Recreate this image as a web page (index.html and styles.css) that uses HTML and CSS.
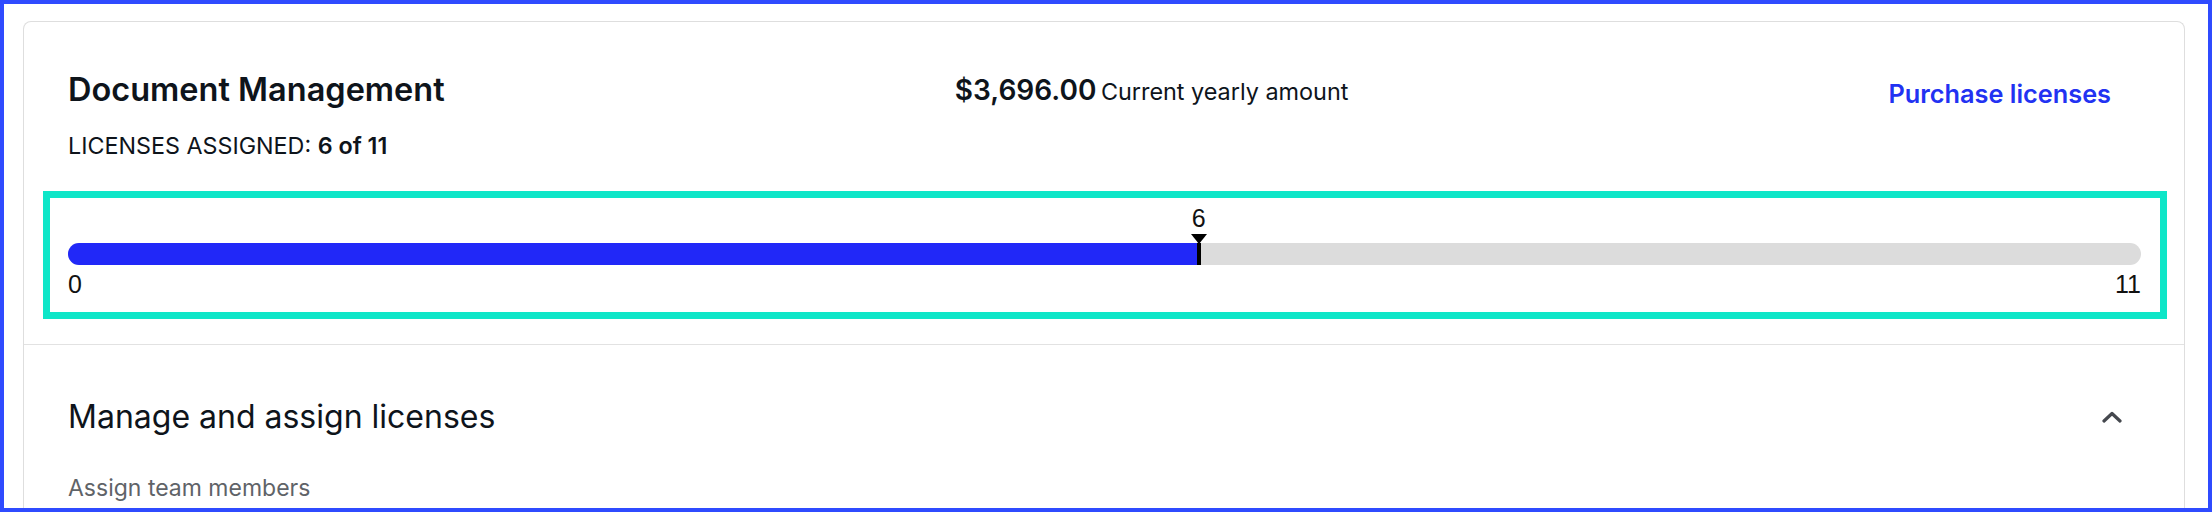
FILE: index.html
```html
<!DOCTYPE html>
<html lang="en">
<head>
<meta charset="utf-8">
<title>Document Management licenses</title>
<link rel="stylesheet" href="styles.css">
</head>
<body>
  <div class="card">
    <section class="summary">
      <div class="summary-row">
        <h1 class="product-title">Document Management</h1>
        <div class="price">
          <span class="price-amount">$3,696.00</span>
          <span class="price-label">Current yearly amount</span>
        </div>
        <a class="purchase-link" href="#">Purchase licenses</a>
      </div>
      <p class="assigned">LICENSES ASSIGNED: <strong>6 of 11</strong></p>
    </section>

    <section class="usage">
      <div class="meter">
        <div class="meter-fill" style="width: 54.545%"></div>
        <div class="meter-marker" style="left: 54.545%">
          <span class="marker-value">6</span>
        </div>
      </div>
      <div class="meter-scale">
        <span>0</span>
        <span>11</span>
      </div>
    </section>

    <section class="manage">
      <div class="manage-head">
        <h2 class="manage-title">Manage and assign licenses</h2>
        <button class="collapse-btn" aria-label="Collapse">
          <svg width="20" height="12" viewBox="0 0 20 12" aria-hidden="true">
            <polyline points="2,10 10,2.5 18,10" fill="none" stroke="#45484e" stroke-width="3.2" stroke-linecap="round" stroke-linejoin="round"/>
          </svg>
        </button>
      </div>
      <p class="manage-sub">Assign team members</p>
    </section>
  </div>
</body>
</html>
```

FILE: styles.css
```css
* {
  box-sizing: border-box;
}

html, body {
  margin: 0;
}

body {
  width: 2212px;
  height: 512px;
  overflow: hidden;
  border: 4px solid #2f4bff;
  padding: 17px 23px 0 19px;
  background: #ffffff;
  font-family: "Inter", "Noto Sans", sans-serif;
  color: #0e141b;
}

.card {
  border: 1px solid #dedede;
  border-bottom: 0;
  border-radius: 8px 8px 0 0;
  background: #ffffff;
  height: 100%;
  overflow: hidden;
}

.summary {
  padding: 48px 43px 0 44px;
}

.summary-row {
  display: flex;
  justify-content: space-between;
  align-items: flex-start;
}

.product-title {
  margin: 0;
  font-size: 32.5px;
  line-height: 40px;
  font-weight: 600;
}

.price {
  margin-top: 0;
  line-height: 40px;
  white-space: nowrap;
}

.price-amount {
  font-size: 28px;
  font-weight: 600;
}

.price-label {
  font-size: 23.4px;
  font-weight: 400;
}

.purchase-link {
  margin-top: 4px;
  padding: 0 30px;
  font-size: 25.3px;
  line-height: 40px;
  font-weight: 600;
  color: #2232f2;
  text-decoration: none;
}

.assigned {
  margin: 18px 0 0;
  font-size: 23.3px;
  line-height: 28px;
  font-weight: 400;
}

.assigned strong {
  font-weight: 600;
}

.usage {
  margin: 31px 17px 25px 19px;
  border: 7px solid #0ee6c8;
  padding: 45px 19px 15px 18px;
}

.meter {
  position: relative;
  height: 22px;
  border-radius: 11px;
  background: #dcdcdc;
}

.meter-fill {
  height: 100%;
  background: #2128f8;
  border-radius: 11px 0 0 11px;
}

.meter-marker {
  position: absolute;
  top: 0;
  bottom: 0;
  width: 4px;
  margin-left: -2px;
  background: #000000;
}

.meter-marker::before {
  content: "";
  position: absolute;
  top: -9px;
  left: 50%;
  margin-left: -8px;
  border-left: 8px solid transparent;
  border-right: 8px solid transparent;
  border-top: 10px solid #000000;
}

.marker-value {
  position: absolute;
  bottom: calc(100% + 12px);
  left: 50%;
  transform: translateX(-50%);
  font-family: "Liberation Sans", Arial, sans-serif;
  font-size: 25px;
  line-height: 26px;
  color: #111;
}

.meter-scale {
  display: flex;
  justify-content: space-between;
  margin-top: 6px;
  font-family: "Liberation Sans", Arial, sans-serif;
  font-size: 25px;
  line-height: 26px;
  color: #111;
}

.manage {
  border-top: 1px solid #e2e2e2;
  padding: 52px 43px 0 44px;
}

.manage-head {
  display: flex;
  align-items: center;
  justify-content: space-between;
}

.manage-title {
  margin: 0;
  font-size: 32px;
  line-height: 40px;
  font-weight: 400;
}

.collapse-btn {
  display: flex;
  align-items: center;
  justify-content: center;
  width: 24px;
  height: 24px;
  margin-right: 17px;
  padding: 0;
  border: 0;
  background: transparent;
}

.manage-sub {
  margin: 37px 0 0;
  font-size: 23px;
  line-height: 28px;
  color: #5f6368;
}
```
